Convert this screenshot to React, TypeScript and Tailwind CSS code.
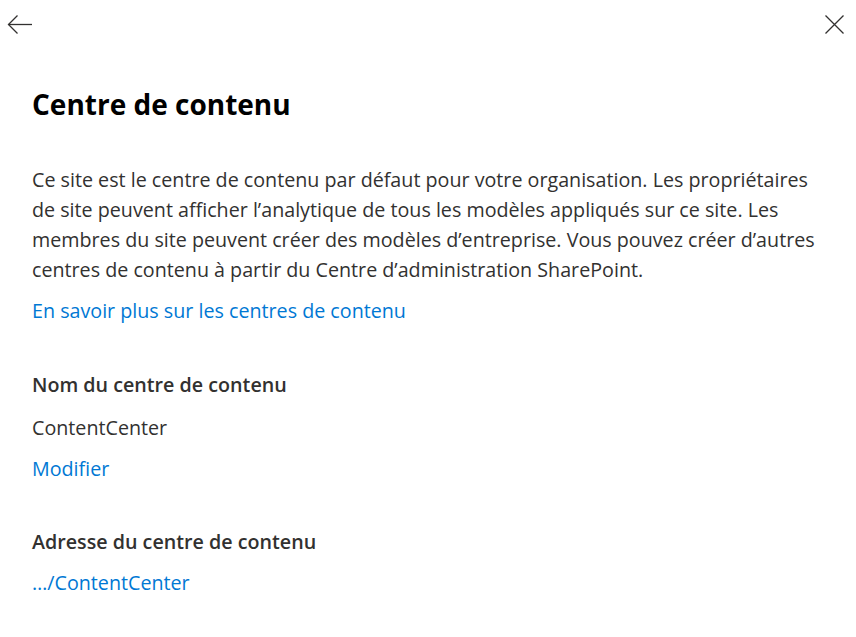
import React from "react";

export default function App() {
  return (
    <div className="w-[856px] h-[637px] bg-white overflow-hidden text-[#323130]" style={{ fontFamily: '"Open Sans", "Noto Sans", sans-serif' }}>
      <div className="flex h-12 items-center justify-between pl-[7px] pr-[12px]">
        <button className="flex items-center" aria-label="Retour">
          <svg width="25" height="19" viewBox="0 0 25 19" fill="none" stroke="#323130" strokeWidth="1.3">
            <path d="M25 9.5H1.5" />
            <path d="M10.5 0.5L1.5 9.5L10.5 18.5" />
          </svg>
        </button>
        <button className="flex items-center" aria-label="Fermer">
          <svg width="19" height="19" viewBox="0 0 19 19" fill="none" stroke="#323130" strokeWidth="1.3">
            <path d="M0.5 0.5L18.5 18.5M18.5 0.5L0.5 18.5" />
          </svg>
        </button>
      </div>
      <div className="px-8">
        <h1 className="mt-9 text-[28px] leading-[40px] font-bold text-black">Centre de contenu</h1>
        <p className="mt-[41px] text-[19.7px] leading-[30px] whitespace-nowrap">
          Ce site est le centre de contenu par défaut pour votre organisation. Les propriétaires
          <br />
          de site peuvent afficher l’analytique de tous les modèles appliqués sur ce site. Les
          <br />
          membres du site peuvent créer des modèles d’entreprise. Vous pouvez créer d’autres
          <br />
          centres de contenu à partir du Centre d’administration SharePoint.
        </p>
        <a className="mt-[11px] block text-[19.7px] leading-[30px] text-[#0078d4]">En savoir plus sur les centres de contenu</a>
        <h2 className="mt-[44px] text-[19.7px] leading-[30px] font-semibold">Nom du centre de contenu</h2>
        <div className="mt-[13px] text-[19.7px] leading-[30px]">ContentCenter</div>
        <a className="mt-[11px] block text-[19.7px] leading-[30px] text-[#0078d4]">Modifier</a>
        <h2 className="mt-[43px] text-[19.7px] leading-[30px] font-semibold">Adresse du centre de contenu</h2>
        <a className="mt-[11px] block text-[19.7px] leading-[30px] text-[#0078d4]">…/ContentCenter</a>
      </div>
    </div>
  );
}
